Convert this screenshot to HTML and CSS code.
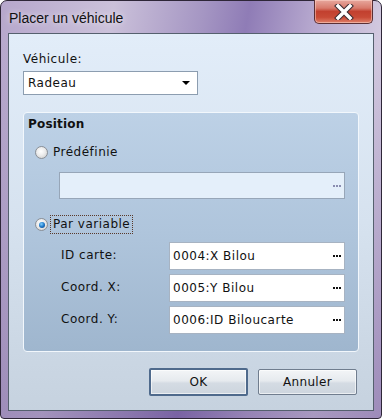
FILE: index.html
```html
<!DOCTYPE html>
<html lang="fr">
<head>
    <meta charset="UTF-8">
    <title>Placer un véhicule</title>
    <link rel="stylesheet" href="styles.css">
</head>
<body>

    <div class="window">
        <div class="titlebar">
            <span class="title">Placer un véhicule</span>
            <div class="close">
                <svg width="20" height="16" viewBox="0 0 20 16">
                    <path d="M4 2 L16 14 M16 2 L4 14" stroke="#3a2a30" stroke-width="5.5" stroke-linecap="square" fill="none"/>
                    <path d="M4 2 L16 14 M16 2 L4 14" stroke="#ffffff" stroke-width="3.5" stroke-linecap="square" fill="none"/>
                </svg>
            </div>
        </div>

        <div class="client">
            <div class="label">Véhicule:</div>
            <div class="combo">
                <span>Radeau</span>
                <span class="arrow"></span>
            </div>

            <div class="group">
                <div class="group-title">Position</div>

                <div class="radio-row first">
                    <span class="radio"></span>
                    <span class="radio-text">Prédéfinie</span>
                </div>
                <div class="picker disabled">
                    <span class="value"></span>
                    <span class="dots"></span>
                </div>

                <div class="radio-row second">
                    <span class="radio checked"></span>
                    <span class="radio-text focus">Par variable</span>
                </div>

                <div class="var-list">
                    <div class="var-row">
                        <span class="var-label">ID carte:</span>
                        <div class="picker">
                            <span class="value">0004:X Bilou</span>
                            <span class="dots"></span>
                        </div>
                    </div>
                    <div class="var-row">
                        <span class="var-label">Coord. X:</span>
                        <div class="picker">
                            <span class="value">0005:Y Bilou</span>
                            <span class="dots"></span>
                        </div>
                    </div>
                    <div class="var-row">
                        <span class="var-label">Coord. Y:</span>
                        <div class="picker">
                            <span class="value">0006:ID Biloucarte</span>
                            <span class="dots"></span>
                        </div>
                    </div>
                </div>
            </div>

            <div class="buttons">
                <button class="btn default">OK</button>
                <button class="btn">Annuler</button>
            </div>
        </div>
    </div>

</body>
</html>
```

FILE: styles.css
```css
body {
    margin: 0;
    background: #ffffff;
    font-family: 'DejaVu Sans', Verdana, sans-serif;
    font-size: 12px;
    letter-spacing: 0.5px;
    color: #111;
}
.window {
    width: 382px;
    height: 419px;
    box-sizing: border-box;
    padding: 0 7px 7px;
    border: 1px solid #2e2638;
    border-radius: 7px 7px 4px 4px;
    background:
        linear-gradient(to bottom, rgba(255,255,255,0) 0, rgba(255,255,255,0) 40px, rgba(70,40,120,0.3) 100%),
        linear-gradient(100deg, #b6a7cc 0%, #cbc1da 25%, #a596c3 45%, #8f7cb6 55%, #b7a9cf 70%, #d2c9df 85%, #c3b6d6 100%);
    display: flex;
    flex-direction: column;
}
.titlebar {
    height: 32px;
    display: flex;
    align-items: flex-start;
    justify-content: space-between;
}
.title {
    font-family: 'Liberation Sans', Arial, sans-serif;
    font-size: 14px;
    letter-spacing: 0;
    color: #111;
    margin: 9px 0 0 1px;
    text-shadow: 0 0 6px rgba(255,255,255,0.8);
}
.close {
    width: 59px;
    height: 24px;
    margin: -1px 1px 0 0;
    box-sizing: border-box;
    border: 1px solid #5a2f35;
    border-top: none;
    border-radius: 0 0 5px 5px;
    background: linear-gradient(to bottom, #e7a89e 0%, #d87a6c 35%, #c2402f 50%, #c84a36 75%, #e0806a 100%);
    box-shadow: inset 0 0 0 1px rgba(255,220,210,0.5);
    display: flex;
    align-items: center;
    justify-content: center;
}
.client {
    flex: 1;
    border: 1px solid #55606e;
    background: linear-gradient(to bottom, #e2edf9 0%, #d6e2ef 50%, #c6d2df 100%);
    padding: 17px 14px 0;
    display: flex;
    flex-direction: column;
}
.label {
    line-height: 15px;
    height: 15px;
    margin-top: 1px;
}
.combo {
    width: 175px;
    height: 24px;
    box-sizing: border-box;
    margin-top: 4px;
    border: 1px solid #8c9db0;
    background: #fff;
    display: flex;
    align-items: center;
    justify-content: space-between;
    padding: 0 4px 0 4px;
}
.arrow {
    width: 0;
    height: 0;
    border-left: 4px solid transparent;
    border-right: 4px solid transparent;
    border-top: 4px solid #000;
    margin-right: 3px;
}
.group {
    margin-top: 17px;
    height: 240px;
    box-sizing: border-box;
    border: 1px solid #f2f7fc;
    border-radius: 4px;
    background: linear-gradient(to bottom, #bdd1e6 0%, #afc5dc 50%, #9fb6ce 100%);
    display: flex;
    flex-direction: column;
}
.group-title {
    font-weight: bold;
    letter-spacing: 0.2px;
    line-height: 15px;
    margin: 4px 0 0 4px;
}
.radio-row {
    display: flex;
    align-items: center;
    height: 19px;
    margin-left: 11px;
}
.radio-row.first { margin-top: 11px; }
.radio-row.second { margin-top: 16px; }
.radio {
    width: 11px;
    height: 11px;
    border: 1px solid #8a8f96;
    border-radius: 50%;
    background: radial-gradient(circle at 45% 40%, #ffffff 0%, #ececec 45%, #c6c6c6 100%);
    margin-right: 3px;
    display: flex;
    align-items: center;
    justify-content: center;
}
.radio.checked::after {
    content: "";
    width: 6px;
    height: 6px;
    border-radius: 50%;
    background: radial-gradient(circle at 40% 35%, #7fd0ff 0%, #1f78c8 50%, #0b3c78 100%);
}
.radio-text {
    padding: 1px 2px;
    line-height: 15px;
}
.radio-text.focus {
    outline: 1px dotted #5a3a2a;
}
.picker {
    height: 27px;
    box-sizing: border-box;
    border: 1px solid #a7b3c2;
    background: #fff;
    display: flex;
    align-items: center;
    justify-content: space-between;
    padding: 0 2px 0 3px;
}
.picker.disabled {
    width: 286px;
    margin: 10px 0 0 35px;
    border-color: #97a6b8;
    background: #e4effa;
}
.dots {
    width: 8px;
    height: 2px;
    margin-right: 1px;
    background: repeating-linear-gradient(to right, #111 0, #111 2px, transparent 2px, transparent 3px);
}
.picker.disabled .dots {
    background: repeating-linear-gradient(to right, #8a8db0 0, #8a8db0 2px, transparent 2px, transparent 3px);
}
.var-list {
    margin: 8px 0 0 37px;
    display: flex;
    flex-direction: column;
    gap: 4px;
}
.var-row {
    display: flex;
    align-items: center;
}
.var-label {
    width: 108px;
    padding-bottom: 2px;
}
.var-row .picker {
    width: 176px;
    height: 28px;
}
.buttons {
    margin-top: 16px;
    display: flex;
    justify-content: flex-end;
    gap: 10px;
    padding-right: 2px;
}
.btn {
    width: 99px;
    height: 26px;
    margin-top: 1px;
    font-family: 'DejaVu Sans', Verdana, sans-serif;
    font-size: 12px;
    letter-spacing: 0.3px;
    color: #111;
    border: 1px solid #707d8e;
    border-radius: 2px;
    background: linear-gradient(to bottom, #f3f5f7 0%, #e6eaee 45%, #d4dbe3 55%, #cdd5de 100%);
    box-shadow: inset 0 0 0 1px rgba(255,255,255,0.6);
    padding: 0;
}
.btn.default {
    border: 2px solid #4f6a8c;
    height: 28px;
    margin-top: 0;
}
```
